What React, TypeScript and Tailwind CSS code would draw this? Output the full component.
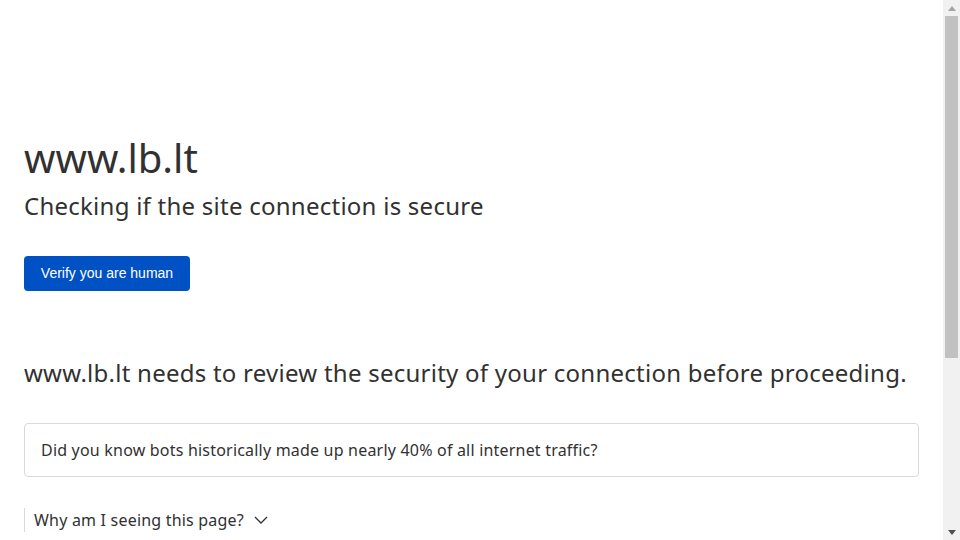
import React from 'react';

function Scrollbar() {
  return (
    <div className="flex w-[17px] shrink-0 flex-col items-center bg-[#f1f1f1]">
      <div className="flex h-[16px] w-full items-center justify-center">
        <svg width="8" height="5" viewBox="0 0 8 5">
          <path d="M0 5 L4 0 L8 5 Z" fill="#a3a3a3" />
        </svg>
      </div>
      <div className="h-[342px] w-[13px] bg-[#c1c1c1]" />
      <div className="flex-1" />
      <div className="flex h-[16px] w-full items-center justify-center">
        <svg width="8" height="5" viewBox="0 0 8 5">
          <path d="M0 0 L8 0 L4 5 Z" fill="#505050" />
        </svg>
      </div>
    </div>
  );
}

export default function App() {
  return (
    <div className="flex h-screen w-full overflow-hidden bg-white text-[#313131] font-['Noto_Sans',sans-serif]">
      <div className="flex-1 overflow-hidden">
        <div className="px-6 pt-[128px]">
          <h1 className="text-[40px] leading-[60px] font-normal">www.lb.lt</h1>
          <h2 className="text-[24px] leading-[36px] font-normal tracking-[0.25px]">
            Checking if the site connection is secure
          </h2>

          <button className="mt-[32px] h-[35px] w-[166px] rounded-[4px] bg-[#0051c3] text-[14px] text-white font-['Liberation_Sans',Arial,sans-serif]">
            Verify you are human
          </button>

          <h2 className="mt-[64px] text-[24px] leading-[36px] font-normal whitespace-nowrap tracking-[0.25px]">
            www.lb.lt needs to review the security of your connection before proceeding.
          </h2>

          <div className="mt-[32px] rounded-[4px] border border-[#d9d9d9] px-4 py-[14px] text-[16px] leading-[24px] tracking-[0.2px]">
            Did you know bots historically made up nearly 40% of all internet traffic?
          </div>

          <div className="mt-[31px] flex items-center border-l border-[#d9d9d9] pl-[9px] text-[16px] leading-[24px] tracking-[0.2px]">
            <span>Why am I seeing this page?</span>
            <svg className="ml-[10px]" width="14" height="8" viewBox="0 0 14 8" fill="none">
              <path d="M1 1 L7 7 L13 1" stroke="#313131" strokeWidth="1.3" />
            </svg>
          </div>
        </div>
      </div>
      <Scrollbar />
    </div>
  );
}
